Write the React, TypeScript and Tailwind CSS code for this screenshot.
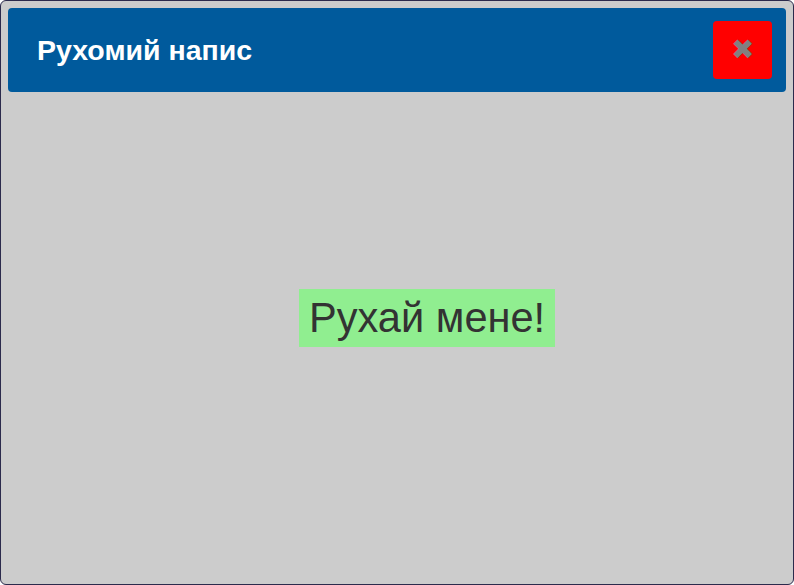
const App = () => {
  return (
    <div className="w-[794px] h-[585px] bg-white font-['Liberation_Sans',Arial,sans-serif]">
      <div className="relative flex flex-col w-full h-full border border-[#2b2a4c] rounded-[6px] bg-[#cccccc] px-[7px] pt-[7px]">
        <div className="flex items-center justify-between h-[84px] bg-[#005a9c] rounded-[4px] pl-[29px] pr-[14px]">
          <h1 className="text-[28.5px] font-bold text-white leading-none">Рухомий напис</h1>
          <button className="flex items-center justify-center w-[59px] h-[58px] bg-[#ff0000] rounded-[4px] text-[#808080] text-[28px] leading-none">
            ✖
          </button>
        </div>
        <div className="relative flex-1">
          <div className="absolute left-[291px] top-[197px] bg-[#90ee90] px-[10px] h-[58px] flex items-center text-[41.6px] text-[#333333] cursor-move">
            Рухай мене!
          </div>
        </div>
      </div>
    </div>
  );
};

export default App;
